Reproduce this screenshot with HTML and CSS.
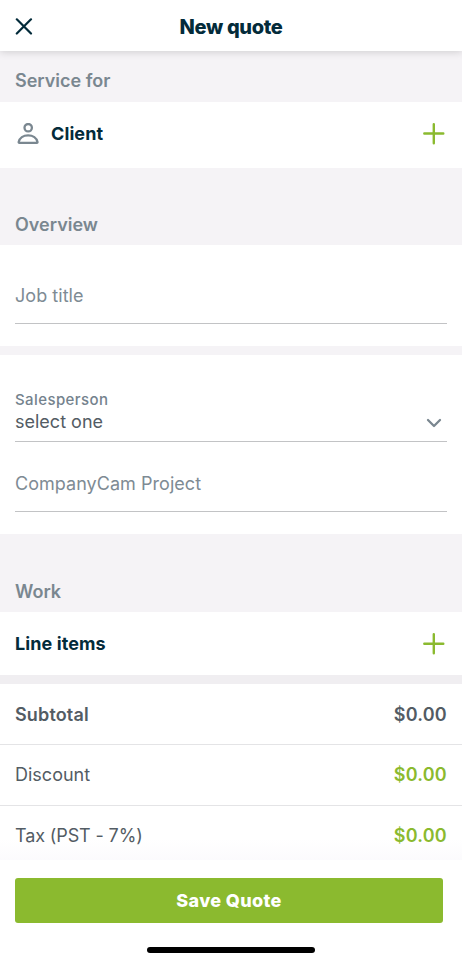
FILE: index.html
```html
<!DOCTYPE html>
<html lang="en">
<head>
    <meta charset="UTF-8">
    <meta name="viewport" content="width=device-width, initial-scale=1.0">
    <title>New quote</title>
    <link rel="stylesheet" href="styles.css">
</head>
<body>
    <header class="top-bar">
        <button class="icon-btn close-btn" aria-label="Close">
            <svg width="18" height="18" viewBox="0 0 18 18"><path d="M1.800 1.300 16 15.500M16 1.300 1.800 15.500"/></svg>
        </button>
        <h1>New quote</h1>
    </header>

    <main class="content">
        <h2 class="section-title section-first"><span>Service for</span></h2>
        <div class="row client-row">
            <svg class="client-icon" width="22" height="22" viewBox="0 0 22 22"><circle cx="11.200" cy="4.700" r="3.700"/><path d="M2.300 19.900h17.600c.5 0 .7-.3.6-.8-.8-4-4.600-6.700-9.400-6.700s-8.600 2.700-9.400 6.700c-.1.500.1.800.6.800z"/></svg>
            <span class="row-label">Client</span>
            <button class="icon-btn add-btn" aria-label="Add client">
                <svg width="22" height="22" viewBox="0 0 22 22"><path d="M10.800 1.200V20.200M1.300 10.500H20.300"/></svg>
            </button>
        </div>

        <h2 class="section-title section-overview"><span>Overview</span></h2>
        <div class="panel job-panel">
            <div class="field job-field"><span class="placeholder">Job title</span></div>
        </div>
        <div class="divider"></div>
        <div class="panel details-panel">
            <div class="field select-field">
                <div class="select-text">
                    <span class="field-label">Salesperson</span>
                    <span class="field-value">select one</span>
                </div>
                <svg class="chevron" width="16" height="10" viewBox="0 0 16 10"><path d="M2 2 8 8 14 2"/></svg>
            </div>
            <div class="field project-field"><span class="placeholder">CompanyCam Project</span></div>
        </div>

        <h2 class="section-title section-work"><span>Work</span></h2>
        <div class="row items-row">
            <span class="row-label">Line items</span>
            <button class="icon-btn add-btn" aria-label="Add line item">
                <svg width="22" height="22" viewBox="0 0 22 22"><path d="M10.800 1.300V20.300M1.300 10.800H20.300"/></svg>
            </button>
        </div>
        <div class="divider divider-dark"></div>

        <div class="total-row subtotal">
            <span class="total-name">Subtotal</span>
            <span class="amount">$0.00</span>
        </div>
        <div class="total-row">
            <span class="total-name">Discount</span>
            <span class="amount">$0.00</span>
        </div>
        <div class="total-row tax">
            <span class="total-name">Tax (PST - 7%)</span>
            <span class="amount">$0.00</span>
        </div>
    </main>

    <footer class="bottom-bar">
        <button class="save-btn">Save Quote</button>
        <div class="home-indicator"></div>
    </footer>
</body>
</html>
```
FILE: styles.css
```css
/* Global Styles and Reset */
* {
    margin: 0;
    padding: 0;
    box-sizing: border-box;
}

body {
    font-family: Inter, "Liberation Sans", sans-serif;
    font-size: 18px;
    line-height: 22px;
    background-color: #fff;
    color: #535c64;
    height: 960px;
    display: flex;
    flex-direction: column;
    overflow: hidden;
}

svg {
    display: block;
    fill: none;
    stroke-linecap: round;
    stroke-linejoin: round;
}

/* Header */
.top-bar {
    height: 51px;
    flex-shrink: 0;
    display: grid;
    grid-template-columns: 48px 1fr 48px;
    align-items: center;
    padding-top: 3px;
    background: #fff;
    box-shadow: 0 1px 8px rgba(0, 0, 0, 0.16);
    z-index: 1;
}

h1 {
    font-size: 20px;
    font-weight: 800;
    line-height: 24px;
    letter-spacing: -0.35px;
    text-align: center;
    color: #032b3a;
}

.icon-btn {
    background: none;
    border: none;
    cursor: pointer;
}

.close-btn {
    padding-left: 15px;
    stroke: #032b3a;
    stroke-width: 2.2;
}

.add-btn {
    margin-left: auto;
    stroke: #8bba2f;
    stroke-width: 2.4;
}

/* Sections */
.content {
    height: 809px;
    flex-shrink: 0;
    overflow: hidden;
}

.section-title {
    display: flex;
    align-items: flex-end;
    background: #f5f3f6;
    padding: 0 15px 9px;
    font-size: 18px;
    font-weight: 600;
    color: #7a8790;
}

.section-first {
    height: 51px;
    padding-bottom: 10px;
}

.section-overview {
    height: 77px;
}

.section-work {
    height: 78px;
}

.row {
    display: flex;
    align-items: center;
    padding: 0 17px 0 15px;
}

.client-row {
    height: 66px;
    padding-bottom: 3px;
}

.items-row {
    height: 63px;
}

.client-icon {
    margin: 0 12px 0 2px;
    stroke: #7a8790;
    stroke-width: 2.3;
}

.row-label {
    font-weight: 700;
    letter-spacing: 0.1px;
    color: #032b3a;
}

.divider {
    height: 9px;
    background: #f5f3f6;
}

.divider-dark {
    background: #f0eef1;
}

/* Form fields */
.panel {
    padding: 0 15px;
}

.job-panel {
    height: 101px;
}

.details-panel {
    height: 179px;
}

.field {
    display: flex;
    align-items: flex-end;
    border-bottom: 1px solid #c2c3c5;
}

.job-field {
    height: 79px;
    padding-bottom: 16px;
}

.select-field {
    height: 87px;
    padding-bottom: 8px;
    justify-content: space-between;
}

.project-field {
    height: 70px;
    padding-bottom: 16px;
}

.placeholder {
    letter-spacing: 0.04px;
    color: #7e8b94;
}

.select-text {
    display: flex;
    flex-direction: column;
}

.field-label {
    font-size: 15px;
    line-height: 22px;
    font-weight: 500;
    letter-spacing: 0.4px;
    color: #74828d;
}

.chevron {
    margin: 0 5px 5px 0;
    stroke: #7a8790;
    stroke-width: 2.3;
}

/* Totals */
.total-row {
    display: flex;
    align-items: center;
    justify-content: space-between;
    height: 61px;
    padding: 0 15px;
    border-bottom: 1px solid #e4e4e6;
}

.subtotal {
    height: 61px;
    padding-top: 2px;
    font-weight: 600;
}

.subtotal .total-name {
    letter-spacing: 0.15px;
}

.tax {
    border-bottom: none;
    padding-bottom: 2px;
    background: linear-gradient(#fff 55%, #faf9fc);
}

.tax .total-name {
    letter-spacing: -0.12px;
}

.amount {
    font-weight: 600;
    letter-spacing: 0.25px;
    color: #8bba2f;
}

.subtotal .amount {
    color: #535c64;
}

/* Footer */
.bottom-bar {
    height: 100px;
    padding: 18px 19px 0 15px;
    background: #fff;
}

.save-btn {
    display: block;
    width: 100%;
    height: 45px;
    padding-bottom: 1px;
    background-color: #8bba2f;
    color: #fff;
    border: none;
    border-radius: 3px;
    font: 800 18px Inter, "Liberation Sans", sans-serif;
    letter-spacing: 0.35px;
    cursor: pointer;
}

.home-indicator {
    width: 168px;
    height: 6px;
    margin: 24px 0 0 132px;
    background: #000;
    border-radius: 3px;
}
```
